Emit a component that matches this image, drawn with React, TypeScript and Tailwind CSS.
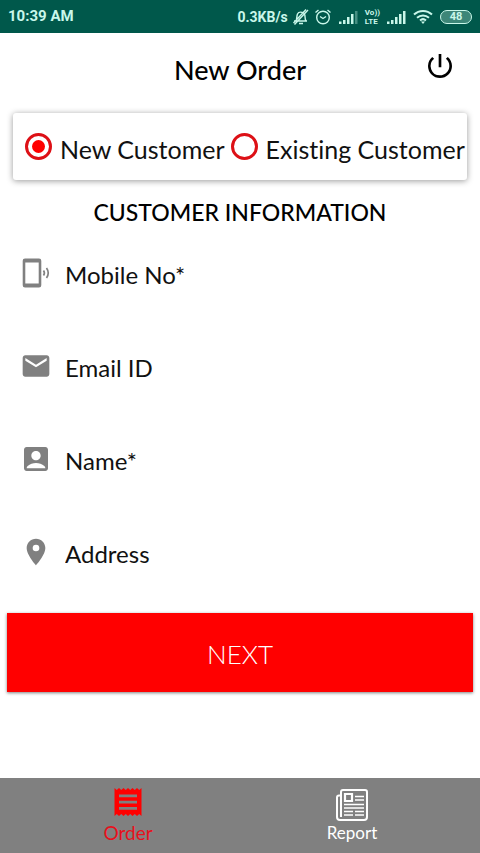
import { useState } from 'react';
import type { ReactNode } from 'react';
import { MdAccountBox, MdEmail, MdLocationOn, MdPowerSettingsNew } from 'react-icons/md';

function BellOffIcon() {
  return (
    <svg viewBox="0 0 18 18" className="h-[18px] w-[18px]" fill="none" stroke="currentColor" strokeWidth="1.4">
      <path d="M2 13h13M4 13c1-2 .5-4.500 1.500-7 1-2.500 5.500-2.500 7 0 1 2 0 5 1.500 7M7 15.500h4M16 2 2.500 16.500M14 1.500 1.500 15" />
    </svg>
  );
}

function AlarmIcon() {
  return (
    <svg viewBox="0 0 18 18" className="h-[18px] w-[18px]" fill="none" stroke="currentColor" strokeWidth="1.4">
      <circle cx="9" cy="9.500" r="6.300" />
      <path d="M1.500 4.500 4.500 2M16.500 4.500l-3-2.500M6 8.500l3 2 3-2" />
    </svg>
  );
}

function SignalIcon({ full }: { full: boolean }) {
  return (
    <svg viewBox="0 0 19 14" className="h-[14px] w-[19px]" fill="currentColor">
      <path d="M0 11.500h2.500V14H0zM4 10h2.500v4H4zM8 7h2.500v7H8zM12 4h2.500v10H12z" />
      <path d="M16 1h2.500v13H16z" opacity={full ? 1 : 0.35} />
    </svg>
  );
}

function WifiIcon() {
  return (
    <svg viewBox="0 0 20 15" className="h-[15px] w-[20px]" fill="none" stroke="currentColor" strokeWidth="2">
      <path d="M1 5.500a13 13 0 0 1 18 0M4 8.700a9 9 0 0 1 12 0M7 11.500a4.500 4.500 0 0 1 6 0" />
      <path d="m8 12.500 2 2.500 2-2.500z" fill="currentColor" stroke="none" />
    </svg>
  );
}

function PhoneRingIcon() {
  return (
    <svg viewBox="0 0 32 32" className="h-8 w-8" fill="currentColor">
      <path
        fillRule="evenodd"
        d="M5 1.500h14a2.300 2.300 0 0 1 2.300 2.300v24.400a2.300 2.300 0 0 1-2.300 2.300H5a2.300 2.300 0 0 1-2.300-2.300V3.800A2.300 2.300 0 0 1 5 1.500zM5.300 5.500v21h13.400v-21z"
      />
      <path d="M23.500 13.500q1.800 2.500 0 5M26.500 11q3.500 5 0 10" fill="none" stroke="currentColor" strokeWidth="1.700" />
    </svg>
  );
}

function ReceiptIcon() {
  return (
    <svg viewBox="0 0 28 30" className="h-[30px] w-7" fill="currentColor">
      <path
        fillRule="evenodd"
        d="M.5 1l2.250 2L5 1l2.250 2L9.500 1l2.250 2L14 1l2.250 2 2.250-2 2.250 2L23 1l2.250 2 2.250-2v28l-2.250-2L23 29l-2.250-2-2.250 2-2.250-2L14 29l-2.250-2-2.250 2-2.250-2L5 29l-2.250-2L.5 29zM5 7.500v2.700h18V7.500zM5 13.700v2.700h18v-2.700zM5 20v2.700h18V20z"
      />
    </svg>
  );
}

function NewspaperIcon() {
  return (
    <svg viewBox="0 0 32 32" className="h-8 w-8" fill="none" stroke="currentColor" strokeWidth="2">
      <path d="M5 6.500H3a2 2 0 0 0-2 2V28a3 3 0 0 0 3 3h24a3 3 0 0 0 3-3V3a2 2 0 0 0-2-2H7a2 2 0 0 0-2 2v25" />
      <path d="M9 5h7v7H9z" strokeWidth="2.200" />
      <path
        d="M19 7.500h9M19 11h9M8 15.500h20M8 19h20M8 22.500h9M19 22.500h9M8 26h9M19 26h9"
        strokeWidth="1.300"
      />
    </svg>
  );
}

function StatusBar() {
  return (
    <div className="flex h-[33px] items-center justify-between bg-[#00584b] px-2 font-['Roboto',sans-serif] text-[15px] font-bold text-[#c9f7ea]">
      <span>10:39 AM</span>
      <div className="flex items-center gap-1">
        <span className="text-sm">0.3KB/s</span>
        <BellOffIcon />
        <div className="flex items-center gap-[7px]">
          <AlarmIcon />
          <SignalIcon full={false} />
          <span className="flex flex-col text-[8px] leading-[9px]">
            <span>Vo))</span>
            <span>LTE</span>
          </span>
          <SignalIcon full />
          <WifiIcon />
          <span className="flex h-[14px] w-8 items-center justify-center rounded-full border border-current bg-[#3d8678] text-[11px] leading-3">
            48
          </span>
        </div>
      </div>
    </div>
  );
}

type ChoiceProps = { label: string; checked: boolean; onChange: () => void };

function Choice({ label, checked, onChange }: ChoiceProps) {
  return (
    <label className="flex items-center gap-2 whitespace-nowrap">
      <input
        type="radio"
        name="customer"
        checked={checked}
        onChange={onChange}
        className="h-[27px] w-[27px] shrink-0 appearance-none rounded-full border-3 border-[#dd1016] bg-white bg-clip-content p-1 checked:bg-[#ff0000]"
      />
      <span className="pt-1 text-[25px] leading-8">{label}</span>
    </label>
  );
}

function Field({ label, type, icon }: { label: string; type: string; icon: ReactNode }) {
  return (
    <label className="flex h-[93px] items-center gap-[13px] px-5">
      <span className="mb-1 text-[#808080]">{icon}</span>
      <input
        type={type}
        aria-label={label}
        placeholder={label}
        className="h-12 min-w-0 flex-1 bg-transparent text-2xl outline-none placeholder:text-[#111111]"
      />
    </label>
  );
}

export default function App() {
  const [customer, setCustomer] = useState('new');
  return (
    <div className="flex min-h-screen flex-col bg-white font-['Lato',sans-serif] text-[#111111] [font-variant-ligatures:none]">
      <StatusBar />
      <header className="grid h-[74px] grid-cols-[1fr_auto_1fr] items-center px-6">
        <h1 className="col-start-2 text-[27px] font-medium text-black">New Order</h1>
        <button type="button" aria-label="Log out" className="mb-2 justify-self-end text-black">
          <MdPowerSettingsNew className="h-8 w-8" />
        </button>
      </header>
      <main>
        <fieldset className="mx-[13px] mt-[6px] flex h-[67px] items-center gap-[6px] rounded-[3px] pl-3 shadow-[0_1px_6px_rgba(0,0,0,0.4)]">
          <Choice label="New Customer" checked={customer === 'new'} onChange={() => setCustomer('new')} />
          <Choice label="Existing Customer" checked={customer === 'existing'} onChange={() => setCustomer('existing')} />
        </fieldset>
        <h2 className="mt-4 text-center text-[23px] leading-8 font-medium text-black">CUSTOMER INFORMATION</h2>
        <Field label="Mobile No*" type="tel" icon={<PhoneRingIcon />} />
        <Field label="Email ID" type="email" icon={<MdEmail className="h-8 w-8" />} />
        <Field label="Name*" type="text" icon={<MdAccountBox className="h-8 w-8" />} />
        <Field label="Address" type="text" icon={<MdLocationOn className="h-8 w-8" />} />
        <div className="px-[7px] pt-[13px]">
          <button
            type="button"
            className="h-[79px] w-full bg-[#ff0000] pt-1 text-[26px] font-light text-white shadow-[0_1px_3px_rgba(0,0,0,0.5)]"
          >
            NEXT
          </button>
        </div>
      </main>
      <nav className="mt-auto flex h-[75px] bg-[#808080] px-4">
        <a href="#order" className="flex flex-1 flex-col items-center pt-[9px] text-[19px] leading-8 text-[#e8101c]">
          <span className="h-[30px] text-[#ff0000]">
            <ReceiptIcon />
          </span>
          Order
        </a>
        <a href="#report" className="flex flex-1 flex-col items-center pt-[11px] text-[17px] leading-6 text-white">
          <NewspaperIcon />
          Report
        </a>
      </nav>
    </div>
  );
}
